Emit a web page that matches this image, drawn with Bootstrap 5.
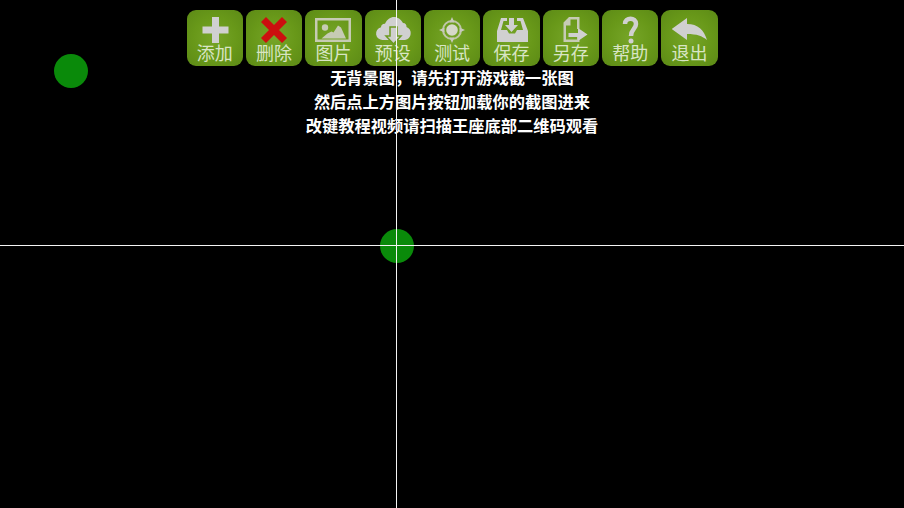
<!DOCTYPE html>
<html lang="zh">
<head>
<meta charset="utf-8">
<title>按键设置</title>
<link href="https://cdn.jsdelivr.net/npm/bootstrap@5.3.0/dist/css/bootstrap.min.css" rel="stylesheet">
<style>
html,body{background:#000;margin:0;height:100%;overflow:hidden}
.stage{position:relative;width:904px;height:508px;background:#000;overflow:hidden;font-family:"Liberation Sans","Noto Sans CJK SC",sans-serif}
.tools{padding-top:10px;padding-left:186.5px;gap:2.85px}
.tool{width:56.5px;height:56px;border-radius:9px;background:radial-gradient(circle at 50% 50%,#76a528 0%,#689819 55%,#5c8a16 100%);color:#d8e5c4;font-size:18px;line-height:22px;overflow:hidden}
.tool svg{width:56.5px;height:36px;display:block;margin-bottom:-3px;flex:none}
.tool span{display:block;height:22px;position:relative}
.ico{fill:#d0d0d0}
.soft{fill:#c6cbb4}
.hint{margin-top:-.5px;color:#fff;font-weight:700;font-size:16.25px;line-height:24px}
.vline{position:absolute;left:396px;top:0;width:1px;height:508px;background:#f4f4f4}
.hline{position:absolute;left:0;top:245px;width:904px;height:1px;background:#f4f4f4}
.dot{position:absolute;width:34px;height:34px;border-radius:50%;background:#0a8a0a}
.dot-a{left:54px;top:54px}
.dot-b{left:380px;top:229px}
</style>
</head>
<body>
<div class="stage">
  <div class="dot dot-a"></div>
  <div class="dot dot-b"></div>
  <div class="d-flex tools">
    <div class="tool d-flex flex-column">
      <svg viewBox="0 0 56.500 36"><path class="ico" d="M25 7h7v9.500h9.500v7H32V33h-7v-9.500h-9.500v-7H25z"/></svg><span class="text-center">添加</span></div>
    <div class="tool d-flex flex-column">
      <svg viewBox="0 0 56.500 36"><path fill="#cc0f0f" d="M20 7l8 8 8-8 5 5-8 8 8 8-5 5-8-8-8 8-5-5 8-8-8-8z"/></svg><span class="text-center">删除</span></div>
    <div class="tool d-flex flex-column">
      <svg viewBox="0 0 56.500 36"><path class="soft" fill-rule="evenodd" d="M10 8h36v24H10zM12.500 10.500v19h31v-19z"/><circle class="soft" cx="20" cy="17.500" r="3.200"/><path class="soft" d="M16.500 28.500l6-5 4-2 2 1 4.500-7 3 2 5 11z"/></svg><span class="text-center">图片</span></div>
    <div class="tool d-flex flex-column">
      <svg viewBox="0 0 56.500 36"><path class="ico" d="M18 30a6.500 6.500 0 0 1-2-12.800c0-2 2-3.700 4-3.400 2-4.500 5.500-6.800 9-6.800s7 2.300 9 6c2.500 0 3.700 2 3.500 4a6.800 6.800 0 0 1-1.500 13z"/><path class="ico" stroke="#6c9a1f" stroke-width="1.500" d="M25 17h7v9h4l-7.500 8-7.500-8h4z"/></svg><span class="text-center">预设</span></div>
    <div class="tool d-flex flex-column">
      <svg viewBox="0 0 56.500 36"><circle cx="28" cy="20" r="9" fill="none" stroke="#bfc6a8" stroke-width="2"/><circle cx="28" cy="20" r="5.800" fill="#d6d8ca"/><path fill="#c8cabc" d="M28 7l2.500 5.500h-5zM28 33l-2.500-5.500h5zM15 20l5.500-2.500v5zM41 20l-5.500 2.500v-5z"/></svg><span class="text-center">测试</span></div>
    <div class="tool d-flex flex-column">
      <svg viewBox="0 0 56.500 36"><path class="ico" d="M18 8h6v3h-3.500L18 20h6l2 3.500h6l2-3.500h6l-2.500-9H34V8h6l5 13v11H14V21z"/><path class="ico" d="M26 8h5v7h4l-6.500 7L22 15h4z"/></svg><span class="text-center">保存</span></div>
    <div class="tool d-flex flex-column">
      <svg viewBox="0 0 56.500 36"><path class="soft" d="M26 7h10.500v12H34V9.500h-6.500v6H23v14h11V27h2.500v5H20.500V12.500z"/><path class="ico" d="M25.500 23H35v-5l9.500 6.500L35 31v-4h-9.500z"/></svg><span class="text-center">另存</span></div>
    <div class="tool d-flex flex-column">
      <svg viewBox="0 0 56.500 36"><path fill="none" stroke="#d0d0d0" stroke-width="4.500" d="M23 14c0-7 11-7 11 0 0 5-5 5-5 12"/><circle class="ico" cx="29" cy="31" r="2.500"/></svg><span class="text-center">帮助</span></div>
    <div class="tool d-flex flex-column">
      <svg viewBox="0 0 56.500 36"><path class="ico" d="M10.700 19L26 8v6c11 0 17 6 20 16-5-4-10-6-20-6v6z"/></svg><span class="text-center">退出</span></div>
  </div>
  <div class="hint text-center">
    <div>无背景图，请先打开游戏截一张图</div>
    <div>然后点上方图片按钮加载你的截图进来</div>
    <div>改键教程视频请扫描王座底部二维码观看</div>
  </div>
  <div class="vline"></div>
  <div class="hline"></div>
</div>
<script src="https://cdn.jsdelivr.net/npm/bootstrap@5.3.0/dist/js/bootstrap.bundle.min.js"></script>
</body>
</html>
